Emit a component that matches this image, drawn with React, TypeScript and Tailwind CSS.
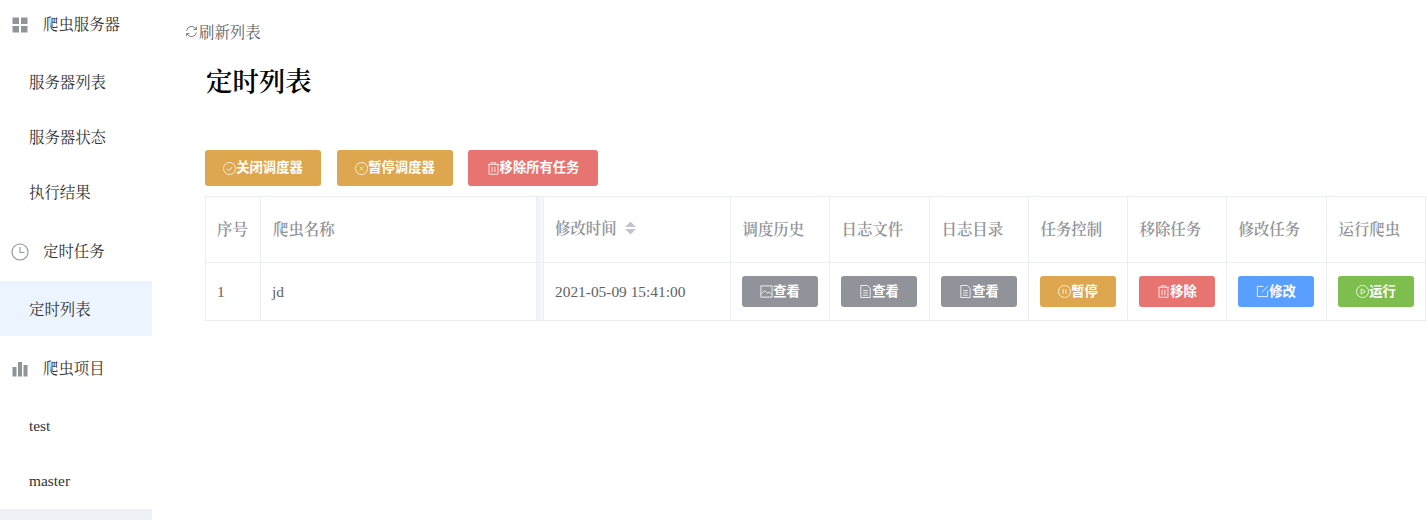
import React from "react";

const font = '"Liberation Serif","Noto Serif CJK SC","Noto Sans CJK SC",serif';
const sans = '"Liberation Sans","Noto Sans CJK SC",sans-serif';

type IP = { className?: string };
const S = ({ className, children }: IP & { children: React.ReactNode }) => (
  <svg viewBox="1 1 14 14" fill="none" stroke="currentColor" strokeWidth="0.9" className={className}>{children}</svg>
);
const CheckC = (p: IP) => <S {...p}><circle cx="8" cy="8" r="6.5" /><path d="M5 8.2l2.2 2.2L11 6.3" /></S>;
const CloseC = (p: IP) => <S {...p}><circle cx="8" cy="8" r="6.5" /><path d="M6 6l4 4M10 6l-4 4" /></S>;
const Trash = (p: IP) => <S {...p}><path d="M2 3.5h12M5.5 3.5V1.8h5v1.7M3.2 3.5v10.7h9.6V3.5M6.5 6v6M9.5 6v6" /></S>;
const Pic = (p: IP) => <S {...p}><rect x="2" y="2" width="12" height="12" /><path d="M2 11l4-4 3 3 2-1.5 3 3" /></S>;
const Doc = (p: IP) => <S {...p}><path d="M3 1.5h7l3 3v10H3zM5.5 7h5M5.5 9.5h5M5.5 12h5" /></S>;
const Pause = (p: IP) => <S {...p}><circle cx="8" cy="8" r="6.5" /><path d="M6.5 5.5v5M9.5 5.5v5" /></S>;
const Edit = (p: IP) => <S {...p}><path d="M9 2.5H2.5v11h11V7M7 9l7-7" /></S>;
const Play = (p: IP) => <S {...p}><circle cx="8" cy="8" r="6.5" /><path d="M6.5 5.2v5.6L11 8z" /></S>;

function Btn({ icon: I, label, color, size }: { icon: (p: IP) => React.ReactElement; label: string; color: string; size: string }) {
  return (
    <button className={`flex items-center justify-center rounded-[3px] text-white font-bold text-[13.3px] ${color} ${size}`} style={{ fontFamily: sans }}>
      <I className="w-[13px] h-[13px]" />
      <span>{label}</span>
    </button>
  );
}

const Head = ({ icon, label, className }: { icon: React.ReactNode; label: string; className?: string }) => (
  <div className={`flex items-center shrink-0 h-[56px] pl-[11px] text-[15.4px] text-[#303133] ${className ?? ""}`}>
    <span className="w-[18px] h-[18px] flex items-center justify-center text-[#909399]">{icon}</span>
    <span className="ml-[14px]">{label}</span>
  </div>
);
const Sub = ({ label, active, className }: { label: string; active?: boolean; className?: string }) => (
  <div className={`flex items-center shrink-0 pl-[29px] text-[15.4px] text-[#303133] h-[55px] ${active ? "bg-[#ecf5ff] pt-[2px]" : ""} ${className ?? ""}`}>{label}</div>
);

const thb = "border border-[#ebeef5] text-left font-semibold text-[15.4px] text-[#909399] p-0";
const tdc = "border border-[#ebeef5] text-[15.4px] text-[#606266] p-0";

const ops = [
  { h: "调度历史", i: Pic, l: "查看", c: "bg-[#909399]" },
  { h: "日志文件", i: Doc, l: "查看", c: "bg-[#909399]" },
  { h: "日志目录", i: Doc, l: "查看", c: "bg-[#909399]" },
  { h: "任务控制", i: Pause, l: "暂停", c: "bg-[#dea64f]" },
  { h: "移除任务", i: Trash, l: "移除", c: "bg-[#e77470]" },
  { h: "修改任务", i: Edit, l: "修改", c: "bg-[#599fff]" },
  { h: "运行爬虫", i: Play, l: "运行", c: "bg-[#7dbe4f]" },
];
const widths = [55, 276, 7, 187, 99, 100, 99, 99, 99, 100, 99];

export default function App() {
  return (
    <div className="relative w-[1428px] h-[520px] overflow-hidden bg-white flex" style={{ fontFamily: font }}>
      <aside className="w-[152px] shrink-0 -mt-[3px] flex flex-col">
        <Head label="爬虫服务器" className="mb-[2px]" icon={
          <svg viewBox="0 0 16 16" className="w-[16px] h-[16px]" fill="currentColor"><rect x="0.5" y="0.5" width="6.5" height="6.5" /><rect x="9" y="0.5" width="6.5" height="6.5" /><rect x="0.5" y="9" width="6.5" height="6.5" /><rect x="9" y="9" width="6.5" height="6.5" /></svg>
        } />
        <Sub label="服务器列表" />
        <Sub label="服务器状态" />
        <Sub label="执行结果" />
        <Head label="定时任务" className="mt-[4px] mb-[1px]" icon={
          <svg viewBox="0 0 18 18" className="w-[18px] h-[18px]" fill="none" stroke="currentColor" strokeWidth="1.1"><circle cx="9" cy="9" r="8" /><path d="M9 4v5.5h4.5" /></svg>
        } />
        <Sub label="定时列表" active />
        <Head label="爬虫项目" className="mt-[5px] mb-[1px]" icon={
          <svg viewBox="0 0 16 16" className="w-[16px] h-[16px]" fill="currentColor"><rect x="0.5" y="6" width="4" height="9.5" /><rect x="6" y="1" width="4" height="14.5" /><rect x="11.5" y="4" width="4" height="11.5" /></svg>
        } />
        <Sub label="test" />
        <Sub label="master" className="mb-[1px]" />
        <div className="h-[20px] shrink-0 bg-[#eef1f6]" />
      </aside>

      <main className="flex-1 pl-[33px] pt-[23px]">
        <div className="flex items-center text-[15.4px] text-[#606266] h-[20px]">
          <svg viewBox="0 0 16 16" className="w-[13px] h-[13px] -mt-[3px] text-[#606266]" fill="none" stroke="currentColor" strokeWidth="1"><path d="M2 7a6 6 0 0 1 10.5-3.2L14 5.5M14 2v3.5h-3.5M14 9a6 6 0 0 1-10.5 3.2L2 10.5M2 14v-3.5h3.5" /></svg>
          <span className="ml-[1px]">刷新列表</span>
        </div>
        <h1 className="ml-[21px] mt-[21px] text-[26.4px] leading-[36px] font-semibold text-black">定时列表</h1>

        <div className="ml-[20px] mt-[50px] flex">
          <Btn icon={CheckC} label="关闭调度器" color="bg-[#dea64f]" size="w-[116px] h-[36px]" />
          <div className="w-[16px]" />
          <Btn icon={CloseC} label="暂停调度器" color="bg-[#dea64f]" size="w-[116px] h-[36px]" />
          <div className="w-[15px]" />
          <Btn icon={Trash} label="移除所有任务" color="bg-[#e77470]" size="w-[130px] h-[36px]" />
        </div>

        <table className="ml-[20px] mt-[10px] border-collapse table-fixed w-[1221px]">
          <colgroup>
            {widths.map((w, i) => <col key={i} style={{ width: w }} />)}
          </colgroup>
          <thead>
            <tr className="h-[66px]">
              <th className={`${thb} pl-[11px]`}>序号</th>
              <th className={`${thb} pl-[12px]`}>爬虫名称</th>
              <th className={`${thb} bg-linear-to-r from-[#f0f1f5] to-[#fbfbfc]`}></th>
              <th className={`${thb} pl-[11px]`}>
                <div className="flex items-center -mt-[2px]">
                  <span>修改时间</span>
                  <svg viewBox="0 0 11 14" className="ml-[8px] w-[11px] h-[14px] text-[#c0c4cc]" fill="currentColor"><path d="M5.5 0.5L11 6H0zM5.5 13.5L0 8h11z" /></svg>
                </div>
              </th>
              {ops.map((o) => <th key={o.h} className={`${thb} pl-[11.5px]`}>{o.h}</th>)}
            </tr>
          </thead>
          <tbody>
            <tr className="h-[58px]">
              <td className={`${tdc} pl-[11px]`}>1</td>
              <td className={`${tdc} pl-[11px]`}>jd</td>
              <td className={`${tdc} bg-linear-to-r from-[#f0f1f5] to-[#fbfbfc]`}></td>
              <td className={`${tdc} pl-[11px] whitespace-nowrap`}>2021-05-09 15:41:00</td>
              {ops.map((o) => (
                <td key={o.h} className={`${tdc} pl-[11px]`}>
                  <Btn icon={o.i} label={o.l} color={o.c} size="w-[76px] h-[31px]" />
                </td>
              ))}
            </tr>
          </tbody>
        </table>
      </main>
    </div>
  );
}
